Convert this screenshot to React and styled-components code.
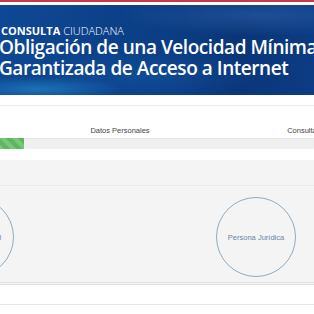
import React from "react";
import styled, { createGlobalStyle } from "styled-components";

const GlobalStyle = createGlobalStyle`
  html, body {
    margin: 0;
    padding: 0;
    background: #ffffff;
    overflow: hidden;
  }
  body {
    font-family: "Liberation Sans", Arial, sans-serif;
  }
`;

const Page = styled.div`
  width: 314px;
  height: 314px;
  overflow: hidden;
  background: #fff;
`;

const TopRule = styled.div`
  height: 2px;
  background: #c23a52;
  margin-bottom: 3px;
`;

const Banner = styled.header`
  height: 90px;
  box-sizing: border-box;
  padding: 19px 0 0 0;
  margin-left: -1px;
  background:
    radial-gradient(ellipse 120px 18px at 40px 84px, rgba(40, 150, 210, 0.55), transparent 70%),
    radial-gradient(ellipse 200px 30px at 260px 10px, rgba(70, 120, 200, 0.35), transparent 70%),
    radial-gradient(ellipse 160px 40px at 150px 70px, rgba(20, 90, 170, 0.5), transparent 70%),
    linear-gradient(100deg, #0e4894 0%, #0b3f86 45%, #0a3678 75%, #0c3c84 100%);
  color: #fff;
  font-family: "Open Sans", "Noto Sans", sans-serif;
`;

const Kicker = styled.div`
  font-size: 11px;
  line-height: 13px;
  margin-left: 2px;
  b {
    font-weight: 700;
  }
  span {
    font-weight: 300;
  }
`;

const Title = styled.h1`
  margin: 0;
  font-size: 19px;
  line-height: 21px;
  letter-spacing: -0.45px;
  font-weight: 600;
  white-space: nowrap;
`;

const Divider = styled.div`
  height: 1px;
  background: ${(p) => p.$color || "#ececec"};
  margin-top: ${(p) => p.$top || 0}px;
`;

const Steps = styled.div`
  display: grid;
  grid-template-columns: repeat(3, 182px);
  margin-left: -153px;
  margin-top: 20px;
`;

const StepLabel = styled.div`
  text-align: center;
  font-size: 7.5px;
  line-height: 9px;
  color: #454545;
  white-space: nowrap;
`;

const Track = styled.div`
  margin-top: 3px;
  height: 11px;
  background: #f0f0f0;
  box-shadow: inset 0 1px 1px rgba(0, 0, 0, 0.04);
`;

const Fill = styled.div`
  height: 100%;
  background-color: #5cb85c;
  background-image: linear-gradient(
    45deg,
    rgba(255, 255, 255, 0.18) 25%,
    transparent 25%,
    transparent 50%,
    rgba(255, 255, 255, 0.18) 50%,
    rgba(255, 255, 255, 0.18) 75%,
    transparent 75%,
    transparent
  );
  background-size: 12px 12px;
`;

const Panel = styled.section`
  margin-top: 11px;
  background: #f4f4f4;
  height: 125px;
  box-sizing: border-box;
  padding-top: 25px;
  border-bottom: 3px double #e2e2e2;
`;

const Choices = styled.div`
  border-top: 1px solid #ebebeb;
  display: flex;
  gap: 202px;
  margin-left: -66px;
  padding-top: 11px;
`;

const Choice = styled.div`
  width: 80px;
  height: 80px;
  flex: none;
  border-radius: 50%;
  border: 1px solid #8fabc2;
  box-sizing: border-box;
  display: flex;
  align-items: center;
  justify-content: center;
  font-size: 7.5px;
  color: #6488a8;
  white-space: nowrap;
`;

export default function App() {
  return (
    <Page>
      <GlobalStyle />
      <TopRule />
      <Banner>
        <Kicker>
          <b>CONSULTA</b> <span>CIUDADANA</span>
        </Kicker>
        <Title>
          Obligación de una Velocidad Mínima
          <br />
          Garantizada de Acceso a Internet
        </Title>
      </Banner>
      <Divider $top={10} />
      <Steps>
        <StepLabel>Tipo de Persona</StepLabel>
        <StepLabel>Datos Personales</StepLabel>
        <StepLabel>Consulta</StepLabel>
      </Steps>
      <Track>
        <Fill style={{ width: "24px" }} />
      </Track>
      <Panel>
        <Choices>
          <Choice>Persona Natural</Choice>
          <Choice>Persona Jurídica</Choice>
        </Choices>
      </Panel>
      <Divider $top={19} $color="#e6e6e6" />
    </Page>
  );
}
